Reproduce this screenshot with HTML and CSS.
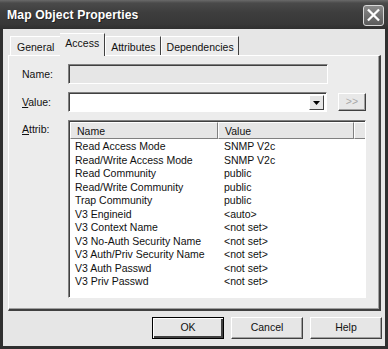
FILE: index.html
```html
<!DOCTYPE html>
<html>
<head>
<meta charset="utf-8">
<link rel="stylesheet" href="styles.css">
</head>
<body>
<div class="window">
  <div class="titlebar">
    <span class="title">Map Object Properties</span>
    <span class="close"><svg width="20" height="20" viewBox="0 0 20 20"><path d="M5 5 L15 15 M15 5 L5 15" stroke="#fff" stroke-width="2.4" stroke-linecap="square"/></svg></span>
  </div>
  <div class="body">
    <div class="tabs">
      <div class="tab">General</div>
      <div class="tab active">Access</div>
      <div class="tab">Attributes</div>
      <div class="tab">Dependencies</div>
    </div>
    <div class="panel">
      <div class="row name-row">
        <label class="lbl">Name:</label>
        <div class="field disabled"></div>
      </div>
      <div class="row value-row">
        <label class="lbl"><u>V</u>alue:</label>
        <div class="field combo"><span class="arrow"><svg width="7" height="4" viewBox="0 0 7 4"><path d="M0 0 H7 L3.5 4 Z" fill="#000"/></svg></span></div>
        <div class="btn-more">&gt;&gt;</div>
      </div>
      <div class="row attrib-row">
        <label class="lbl"><u>A</u>ttrib:</label>
        <div class="list">
          <div class="header">
            <div class="hcell c1">Name</div>
            <div class="hcell c2">Value</div>
            <div class="hcell c3"></div>
          </div>
          <div class="items">
            <div class="item"><span class="c1">Read Access Mode</span><span class="c2">SNMP V2c</span></div>
            <div class="item"><span class="c1">Read/Write Access Mode</span><span class="c2">SNMP V2c</span></div>
            <div class="item"><span class="c1">Read Community</span><span class="c2">public</span></div>
            <div class="item"><span class="c1">Read/Write Community</span><span class="c2">public</span></div>
            <div class="item"><span class="c1">Trap Community</span><span class="c2">public</span></div>
            <div class="item"><span class="c1">V3 Engineid</span><span class="c2">&lt;auto&gt;</span></div>
            <div class="item"><span class="c1">V3 Context Name</span><span class="c2">&lt;not set&gt;</span></div>
            <div class="item"><span class="c1">V3 No-Auth Security Name</span><span class="c2">&lt;not set&gt;</span></div>
            <div class="item"><span class="c1">V3 Auth/Priv Security Name</span><span class="c2">&lt;not set&gt;</span></div>
            <div class="item"><span class="c1">V3 Auth Passwd</span><span class="c2">&lt;not set&gt;</span></div>
            <div class="item"><span class="c1">V3 Priv Passwd</span><span class="c2">&lt;not set&gt;</span></div>
          </div>
        </div>
      </div>
    </div>
    <div class="buttons">
      <div class="btn default">OK</div>
      <div class="btn">Cancel</div>
      <div class="btn">Help</div>
    </div>
  </div>
</div>
</body>
</html>
```
FILE: styles.css
```css
* { box-sizing: border-box; }
html, body { margin: 0; padding: 0; background: #2a2a2a; }
body { width: 388px; height: 349px; overflow: hidden; font-family: "Liberation Sans", Arial, sans-serif; font-size: 10.5px; color: #111; }

.window {
  width: 388px; height: 349px;
  background: #2f2f2f;
  padding: 0 3px 3px 3px;
  display: flex; flex-direction: column;
}
.titlebar {
  height: 29px; margin: 0 -3px;
  background: linear-gradient(#6a6a6a 0, #4a4a4a 3px, #3e3e3e 12px, #383838 24px, #2f2f2f 29px);
  display: flex; align-items: center; justify-content: space-between;
  padding: 0 4px 0 7px;
}
.title { color: #fff; font-weight: bold; font-size: 12.2px; letter-spacing: 0.1px; text-shadow: 1px 1px 0 #222; padding-top: 1px; }
.close {
  width: 21px; height: 21px; border: 1px solid #d8d8d8; border-radius: 3px;
  background: linear-gradient(#8a8a8a, #5a5a5a);
  display: flex; align-items: center; justify-content: center; margin-top: 1px;
}
.body { flex: 1; background: #e6e6e6; display: flex; flex-direction: column; padding: 0 0 0 5px; }

.tabs { display: flex; align-items: flex-end; height: 26px; padding-left: 2px; position: relative; z-index: 1; }
.tab {
  height: 19px; padding: 3px 4px 0 5px; background: #ececec;
  border-top: 1px solid #fff; border-left: 1px solid #fff; border-right: 1px solid #404040;
  line-height: 14px;
}
.tab:first-child { border-right: none; padding-left: 6px; padding-right: 6px; }
.tab.active { height: 23px; padding-top: 3px; margin-bottom: -1px; border-left: none; padding-left: 5px; padding-right: 5px; line-height: 13px; }

.panel {
  width: 373px; height: 256px;
  background: #ececec;
  border-top: 1px solid #fff; border-left: 1px solid #fff;
  border-right: 2px solid #404040; border-bottom: 2px solid #404040;
  box-shadow: inset -1px -1px 0 #a0a0a0;
  padding: 8px 0 0 13px;
  display: flex; flex-direction: column;
}
.row { display: flex; }
.lbl { width: 46px; font-size: 10.5px; }
.name-row { align-items: center; height: 20px; }
.field {
  height: 20px;
  border-top: 1px solid #808080; border-left: 1px solid #808080;
  border-right: 1px solid #fff; border-bottom: 1px solid #fff;
  box-shadow: inset 1px 1px 0 #404040;
}
.field.disabled { width: 260px; background: #e6e6e6; }
.value-row { align-items: center; height: 20px; margin-top: 8px; }
.field.combo { width: 259px; background: #fff; display: flex; justify-content: flex-end; padding: 2px 2px 1px 0; }
.arrow {
  width: 15px; height: 15px; background: #e6e6e6;
  border-top: 1px solid #fff; border-left: 1px solid #fff;
  border-right: 1px solid #404040; border-bottom: 1px solid #404040;
  display: flex; align-items: center; justify-content: center;
}
.btn-more {
  width: 28px; height: 18px; margin-left: 11px; color: #a8a8a8; text-align: center; line-height: 15px;
  border-top: 1px solid #fff; border-left: 1px solid #fff;
  border-right: 1px solid #404040; border-bottom: 1px solid #404040;
  box-shadow: inset -1px -1px 0 #a0a0a0; background: #e8e8e8;
}
.attrib-row { margin-top: 8px; }
.attrib-row .lbl { padding-top: 3px; }
.list {
  width: 298px; height: 178px; background: #fff;
  border-top: 1px solid #808080; border-left: 1px solid #808080;
  border-right: 1px solid #fff; border-bottom: 1px solid #fff;
  box-shadow: inset 1px 1px 0 #404040;
  padding: 1px 0 0 1px;
}
.header { display: flex; height: 17px; }
.hcell {
  background: #e6e6e6; height: 17px; line-height: 16px; padding-left: 6px;
  border-top: 1px solid #fff; border-left: 1px solid #fff;
  border-right: 1px solid #808080; border-bottom: 1px solid #808080;
}
.hcell.c1 { width: 148px; }
.hcell.c2 { width: 136px; }
.hcell.c3 { flex: 1; border-right: none; }
.items { padding-top: 1px; }
.item { display: flex; height: 13.5px; line-height: 13.5px; }
.item .c1 { width: 148px; padding-left: 5px; }
.item .c2 { padding-left: 6px; }

.buttons { display: flex; justify-content: flex-end; gap: 7px; margin-top: 6px; padding-right: 3px; }
.btn {
  width: 72px; height: 22px; text-align: center; line-height: 19px;
  background: #e6e6e6;
  border-top: 1px solid #fff; border-left: 1px solid #fff;
  border-right: 1px solid #404040; border-bottom: 1px solid #404040;
  box-shadow: inset -1px -1px 0 #a0a0a0;
}
.btn.default { border: 1px solid #000; box-shadow: inset 1px 1px 0 #fff, inset -2px -2px 0 #404040; }
```
